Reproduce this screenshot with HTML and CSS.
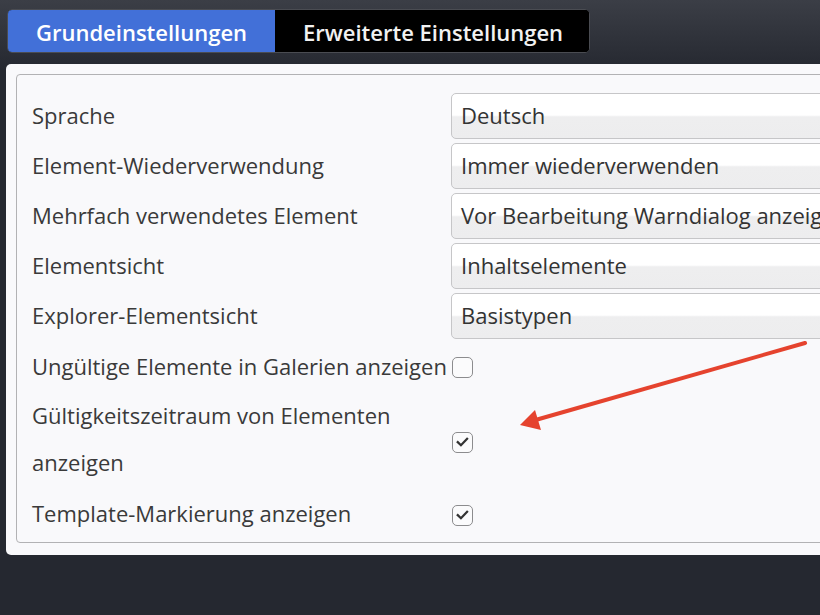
FILE: index.html
```html
<!DOCTYPE html>
<html lang="de">
<head>
<meta charset="utf-8">
<title>Einstellungen</title>
<link rel="stylesheet" href="styles.css">
</head>
<body>
<div class="page">
  <div class="tabs">
    <div class="tab active">Grundeinstellungen</div>
    <div class="tab">Erweiterte Einstellungen</div>
  </div>
  <div class="panel">
    <div class="fieldset">
      <div class="form">
        <div class="label">Sprache</div>
        <div class="field"><div class="select">Deutsch</div></div>

        <div class="label">Element-Wiederverwendung</div>
        <div class="field"><div class="select">Immer wiederverwenden</div></div>

        <div class="label">Mehrfach verwendetes Element</div>
        <div class="field"><div class="select">Vor Bearbeitung Warndialog anzeigen</div></div>

        <div class="label">Elementsicht</div>
        <div class="field"><div class="select">Inhaltselemente</div></div>

        <div class="label">Explorer-Elementsicht</div>
        <div class="field"><div class="select">Basistypen</div></div>

        <div class="label label-r6">Ungültige Elemente in Galerien anzeigen</div>
        <div class="check-cell check-r6"><span class="checkbox"></span></div>

        <div class="label label-r7">Gültigkeitszeitraum von Elementen anzeigen</div>
        <div class="check-cell check-r7"><span class="checkbox"><svg viewBox="0 0 22 22" width="20" height="20"><path d="M5.5 11.2 L9.2 14.8 L16.3 7.4" fill="none" stroke="#333" stroke-width="2.6" stroke-linecap="square"/></svg></span></div>

        <div class="label label-r8">Template-Markierung anzeigen</div>
        <div class="check-cell"><span class="checkbox"><svg viewBox="0 0 22 22" width="20" height="20"><path d="M5.5 11.2 L9.2 14.8 L16.3 7.4" fill="none" stroke="#333" stroke-width="2.6" stroke-linecap="square"/></svg></span></div>
      </div>
    </div>
  </div>
  <svg class="arrow" width="820" height="615" viewBox="0 0 820 615">
    <line x1="805" y1="343" x2="532" y2="421" stroke="#e5432e" stroke-width="4" stroke-linecap="round"/>
    <polygon points="520,425 535,410 541,430" fill="#e5432e"/>
  </svg>
</div>
</body>
</html>
```

FILE: styles.css
```css
html, body {
  margin: 0;
  padding: 0;
}
body {
  width: 820px;
  height: 615px;
  overflow: hidden;
  background: #252830;
  font-family: "Open Sans", "Noto Sans", sans-serif;
}
.page {
  position: relative;
  width: 820px;
  height: 615px;
  overflow: hidden;
  background: linear-gradient(to bottom, #3b3e46 0px, #2a2d35 55px, #252830 70px, #252830 100%);
  padding-top: 9px;
  box-sizing: border-box;
}
.tabs {
  display: inline-flex;
  margin-left: 7px;
  border: 1px solid #4a4c52;
  border-radius: 5px;
  overflow: hidden;
  background: #000;
}
.tab {
  height: 40px;
  line-height: 40px;
  padding: 2px 28px 0 28px;
  font-size: 22px;
  font-weight: 600;
  color: #f2f2f2;
  background: #000;
}
.tab.active {
  background: #4270d8;
  color: #fff;
}
.tab + .tab {
  padding-right: 26px;
}
.panel {
  margin-top: 11px;
  margin-left: 6px;
  width: 1000px;
  background: #f9f9fb;
  border-radius: 5px;
  padding: 10px 10px 12px 10px;
}
.fieldset {
  border: 1px solid #b2b2b4;
  border-radius: 4px;
  padding: 16px 0 1px 15px;
}
.form {
  display: grid;
  grid-template-columns: 419px 1fr;
  grid-template-rows: repeat(5, 50px) 52px 96px 52px;
}
.label {
  font-size: 22px;
  line-height: 46px;
  padding-top: 1px;
  color: #3a3a3a;
}
.label-r6 {
  padding-top: 2px;
  white-space: nowrap;
}
.label-r7 {
  line-height: 47px;
  padding-top: 0;
  margin-top: -1px;
}
.label-r8 {
  padding-top: 1px;
}
.field {
  padding: 2px 40px 2px 0;
}
.select {
  height: 44px;
  line-height: 42px;
  border: 1px solid #c6c6c8;
  border-radius: 5px;
  padding-left: 9px;
  font-size: 22px;
  color: #333;
  white-space: nowrap;
  overflow: hidden;
  background: linear-gradient(to bottom, #ffffff 0%, #ffffff 48%, #eeeeef 52%, #ededee 100%);
}
.check-cell {
  display: flex;
  align-items: center;
}
.check-r6 {
  padding-top: 1px;
}
.check-r7 {
  padding-top: 2px;
}
.checkbox {
  display: flex;
  align-items: center;
  justify-content: center;
  width: 19px;
  height: 19px;
  margin-left: 1px;
  border: 1.5px solid #8c8c8e;
  border-radius: 5px;
  background: #fbfbfc;
}
.checkbox svg {
  display: block;
}
.arrow {
  position: absolute;
  left: 0;
  top: 0;
  pointer-events: none;
}
```
